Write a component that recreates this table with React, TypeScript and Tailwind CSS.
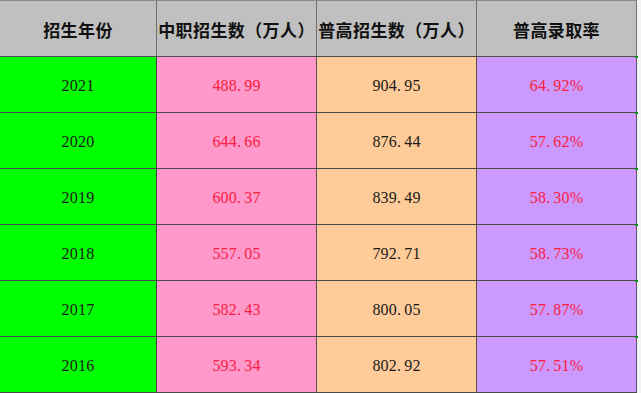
import React from "react";

const rows = [
  { y: "2021", a: "488.99", b: "904.95", c: "64.92%" },
  { y: "2020", a: "644.66", b: "876.44", c: "57.62%" },
  { y: "2019", a: "600.37", b: "839.49", c: "58.30%" },
  { y: "2018", a: "557.05", b: "792.71", c: "58.73%" },
  { y: "2017", a: "582.43", b: "800.05", c: "57.87%" },
  { y: "2016", a: "593.34", b: "802.92", c: "57.51%" },
];

function Num({ v }: { v: string }) {
  const [i, f] = v.split(".");
  return (
    <span>
      {i}
      <span className="mr-[3px]">.</span>
      {f}
    </span>
  );
}

const numFont = { fontFamily: '"Liberation Serif", "Noto Sans CJK SC", serif' } as const;
const cjk = { fontFamily: '"Noto Sans CJK SC", "Noto Sans", sans-serif' } as const;

export default function App() {
  return (
    <div className="w-[641px] h-[393px] bg-white overflow-hidden flex">
      <div className="w-[637px] flex flex-col">
        <div
          className="flex h-[57px] bg-[#c0c0c0] border-t border-b border-t-[#8a8a8a] border-b-[#505050] text-[17px] font-bold text-[#111] tracking-[0.4px]"
          style={cjk}
        >
          <div className="w-[157px] border-r border-[#6e6e6e] flex items-center justify-center pt-[2px]">招生年份</div>
          <div className="w-[160px] border-r border-[#6e6e6e] flex items-center justify-center pt-[2px] whitespace-nowrap">中职招生数（万人）</div>
          <div className="w-[160px] border-r border-[#6e6e6e] flex items-center justify-center pt-[2px] whitespace-nowrap">普高招生数（万人）</div>
          <div className="w-[160px] border-r border-[#6e6e6e] flex items-center justify-center pt-[2px]">普高录取率</div>
        </div>
        {rows.map((r) => (
          <div key={r.y} className="flex h-[56px] border-b border-[#4a4a4a] text-[16px]" style={numFont}>
            <div className="w-[157px] bg-[#00ff00] border-r border-[#3a4a3a] flex items-center justify-center pt-[3px] text-[#1a1a1a] tracking-[0.2px]">
              {r.y}
            </div>
            <div className="w-[160px] bg-[#ff99cc] border-r border-[#5a4a50] flex items-center justify-center pt-[3px] text-[#f8203c] tracking-[0.2px]">
              <Num v={r.a} />
            </div>
            <div className="w-[160px] bg-[#ffcc99] border-r border-[#5a5048] flex items-center justify-center pt-[3px] text-[#1a1a1a] tracking-[0.2px]">
              <Num v={r.b} />
            </div>
            <div className="relative w-[160px] bg-[#cc99ff] border-r border-[#55506a] flex items-center justify-center pt-[3px] text-[#f8203c] tracking-[0.2px]">
              <Num v={r.c} />
              <div className="absolute -right-[2px] -top-px w-[3px] h-[2px] bg-[#1a8a1a]" />
            </div>
          </div>
        ))}
      </div>
      <div className="flex-1 bg-[#f4f4f4]" />
    </div>
  );
}
